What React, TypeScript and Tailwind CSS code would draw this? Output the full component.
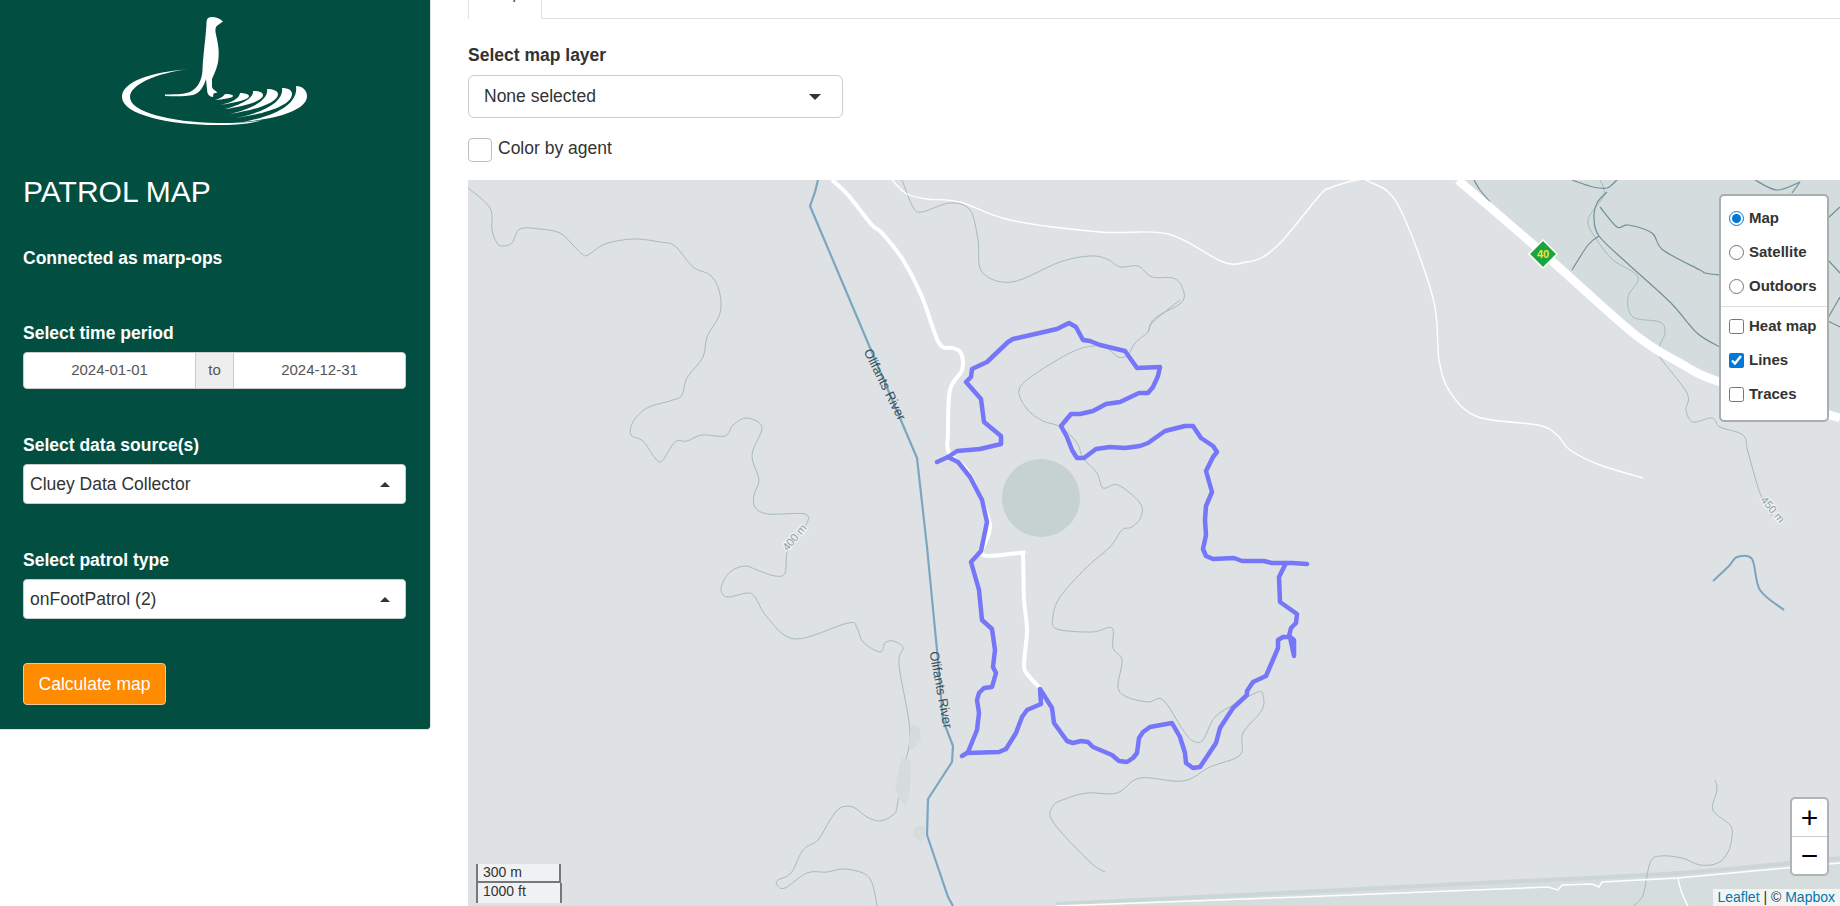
const contours = [
  "468,188 490,208 492,230 497,243 503,246 512,243 520,229 540,229 560,233 573,245 582,254 588,255 605,244 633,239 660,242 675,246 693,267 710,275 719,290 720,313 707,337 703,357 687,378 682,395 673,400 647,408 633,422 631,435 643,441 655,458 662,461 675,442 687,441 702,435 725,436 733,425 747,418 762,427 753,450 753,462 759,480 754,495 755,507 768,514 805,514 806,525 795,538 787,552 785,573 775,576 757,570 745,566 730,572 721,588 727,597 747,593 755,597 767,617 795,639 848,623 857,628 863,642 880,652 885,643 893,641 903,648 899,665 910,733 902,773 897,807 893,815 880,821 867,817 853,807 840,808 830,820 818,840 803,850 791,873 778,880 777,885 785,888 807,873 827,872 843,869 863,873 872,883 877,906",
  "1180,300 1153,322 1148,332 1135,343 1128,355 1118,357 1107,348 1093,346 1072,352 1035,374 1019,390 1027,409 1043,421 1061,427 1077,443 1083,458 1097,473 1103,488 1118,485 1140,503 1141,517 1132,527 1122,530 1110,547 1087,567 1060,597 1053,617 1057,629 1092,632 1112,628 1113,648 1122,660 1118,687 1127,697 1148,702 1163,700 1183,730 1193,741 1203,740 1215,717 1237,703 1258,692 1263,695 1262,710 1243,733 1240,755 1210,767 1183,781 1140,778 1117,793 1087,793 1065,799 1053,806 1053,822 1090,862 1105,872",
  "902,180 913,207 922,212 950,203 970,210 978,240 982,272 1012,282 1060,262 1090,256 1107,259 1120,267 1138,266 1152,277 1173,278 1182,287 1182,302 1155,318 1148,332",
  "1600,180 1604,195 1588,220 1597,240 1613,260 1638,277 1628,297 1633,317 1660,322 1665,333 1660,345 1660,357 1687,393 1686,410 1693,422 1712,418 1720,427 1743,435 1748,452 1760,493 1772,516",
  "1715,780 1717,790 1713,810 1730,825 1732,837 1728,852 1718,863 1700,865 1682,858 1660,856 1650,863 1643,895 1633,906",
];

const darkLines = [
  "1474,180 1480,190 1490,202",
  "1572,180 1593,187 1607,188 1617,180",
  "1607,192 1597,203 1594,217 1599,236 1627,263 1670,302 1697,333 1720,347",
  "1600,207 1617,227 1628,225 1652,233 1663,250 1700,270 1705,273 1720,275",
  "1599,236 1588,245 1572,270",
  "1755,180 1777,190 1800,182",
  "1792,193 1800,182",
  "1828,218 1840,207",
  "1828,260 1840,273",
  "1828,318 1840,297",
  "1828,321 1840,327",
];

const riverPts = "818,180 815,192 810,206 868,343 917,458 927,547 937,650 943,720 953,746 952,762 928,799 927,835 948,897 953,906";

const routeOuter =
  "937,462 948,457 957,451 980,449 1001,444 1001,436 984,422 981,399 966,382 971,377 972,369 987,362 1008,342 1013,339 1057,329 1069,323 1076,327 1083,340 1090,341 1100,345 1125,351 1137,368 1160,367 1158,376 1153,387 1148,393 1139,393 1120,402 1106,404 1093,411 1080,414 1071,414 1061,426 1067,437 1072,450 1077,458 1084,458 1096,449 1110,447 1125,448 1140,446 1148,443 1165,431 1185,426 1193,426 1201,438 1213,446 1217,452 1213,457 1206,471 1212,492 1206,506 1205,520 1206,535 1203,549 1206,556 1213,559 1234,558 1242,561 1264,561 1272,563 1292,563 1307,564";
const routeLoop =
  "1286,563 1279,577 1280,602 1297,614 1296,623 1291,628 1289,636 1294,640 1294,656 1290,637 1283,637 1278,640 1278,648 1266,676 1253,682 1247,691 1247,695 1233,708 1220,728 1216,743 1200,767 1193,768 1186,763 1185,753 1180,737 1172,723 1150,727 1143,732 1139,738 1137,753 1133,758 1127,762 1119,761 1112,755 1093,747 1088,742 1081,741 1073,743 1067,741 1054,723 1052,708 1040,689 1041,704 1027,710 1022,717 1016,733 1006,749 999,752 967,753 962,756 968,752 977,730 979,713 977,700 979,693 984,688 992,687 996,673 993,667 995,650 992,629 982,620 979,590 971,562 981,551 987,522 982,500 970,477 958,462 948,457";

// catmull-rom through the points, the contours and roads are curved in the tiles
function smooth(points: string) {
  const p = points.split(" ").map((s) => s.split(",").map(Number));
  let d = `M${p[0][0]} ${p[0][1]}`;
  for (let i = 0; i < p.length - 1; i++) {
    const a = p[Math.max(i - 1, 0)];
    const b = p[i];
    const c = p[i + 1];
    const e = p[Math.min(i + 2, p.length - 1)];
    d += ` C${b[0] + (c[0] - a[0]) / 6} ${b[1] + (c[1] - a[1]) / 6} ${c[0] - (e[0] - b[0]) / 6} ${c[1] - (e[1] - b[1]) / 6} ${c[0]} ${c[1]}`;
  }
  return d;
}

function MapTiles() {
  return (
    <svg viewBox="468 180 1372 726" className="block w-full h-full">
      <polygon points="1462,180 1840,180 1840,414 1720,378 1680,359 1633,329 1543,249" fill="#d5dcdd" />
      <polygon points="1056,906 1300,893 1500,884 1678,874 1840,859 1840,906" fill="#d6dddd" />
      <path d={smooth("1056,904 1300,892 1500,882 1678,873 1840,858")} fill="none" stroke="#c5d1d0" strokeWidth="4" opacity="0.7" />
      {contours.map((c) => (
        <path key={c} d={smooth(c)} fill="none" stroke="#a6bbb9" strokeWidth="1" />
      ))}
      {darkLines.map((c) => (
        <path key={c} d={smooth(c)} fill="none" stroke="#6f919a" strokeWidth="1.2" />
      ))}
      <circle cx="1041" cy="498" r="39" fill="#c5d2cf" />
      <polygon points="912,724 920,728 921,740 912,750 908,745" fill="#d5dcdb" />
      <polygon points="902,757 911,762 910,790 906,806 898,798 895,785" fill="#d5dcdb" />
      <polygon points="920,825 925,828 925,838 920,841 913,836 914,828" fill="#d5dcdb" />
      <path d={smooth("1713,581 1729,566 1737,557 1752,559 1760,590 1784,610")} fill="none" stroke="#7aa5bf" strokeWidth="2" />
      <polyline points={riverPts} fill="none" stroke="#7ba6c0" strokeWidth="2.2" strokeLinejoin="round" />
      <path d={smooth("832,180 848,195 872,225 882,233 903,260 922,297 939,343 953,348 961,353 962,370 950,390 948,433 949,453 968,472 988,517 989,533 983,555 1020,553 1023,557 1024,600 1027,630 1024,665 1028,675 1040,688")} fill="none" stroke="#fff" strokeWidth="4" strokeLinejoin="round" />
      <path d={smooth("892,180 907,194 927,199 960,202 1010,220 1100,232 1168,234 1223,262 1247,262 1263,257 1283,240 1320,195 1330,188 1357,180 1370,182 1398,205 1433,298 1439,360 1450,392 1478,417 1538,425 1557,435 1570,450 1600,465 1643,478")} fill="none" stroke="#fff" strokeWidth="1.4" />
      <path d="M1056 906 L1300 897 L1500 889 L1548 887 L1558 890 L1562 885 L1592 884 L1599 887 L1602 882 L1678 878 L1840 863" fill="none" stroke="#fff" strokeWidth="1.5" />
      <path d="M1678 878 Q1680 892 1688 906" fill="none" stroke="#fff" strokeWidth="1.5" />
      <path d={smooth("1458,180 1543,253 1633,333 1680,363 1720,382 1840,418")} fill="none" stroke="#fff" strokeWidth="8.5" />
      <polyline points={routeOuter} fill="none" stroke="#7676f8" strokeWidth="4.5" strokeLinejoin="round" strokeLinecap="round" />
      <polyline points={routeLoop} fill="none" stroke="#7676f8" strokeWidth="4.5" strokeLinejoin="round" strokeLinecap="round" />
      <polygon points="1543,240 1557,254 1543,268 1529,254" fill="#1ba541" stroke="#fff" strokeWidth="1.5" />
      <text x="1543" y="258" textAnchor="middle" fontSize="11" fontWeight="700" fill="#f2e23d" fontFamily="Liberation Sans, sans-serif">40</text>
      <text transform="translate(884 385) rotate(63.5)" textAnchor="middle" dominantBaseline="middle" fontSize="13" fill="#36505e" fontFamily="Liberation Sans, sans-serif">Olifants River</text>
      <text transform="translate(940 690) rotate(79.5)" textAnchor="middle" dominantBaseline="middle" fontSize="13" fill="#36505e" fontFamily="Liberation Sans, sans-serif">Olifants River</text>
      <text transform="translate(795 538) rotate(-50)" textAnchor="middle" dominantBaseline="middle" fontSize="11" fill="#8fa09f" stroke="#f0f2f3" strokeWidth="2.5" paintOrder="stroke" fontFamily="Liberation Sans, sans-serif">400 m</text>
      <text transform="translate(1772 510) rotate(50)" textAnchor="middle" dominantBaseline="middle" fontSize="11" fill="#8fa09f" stroke="#f0f2f3" strokeWidth="2.5" paintOrder="stroke" fontFamily="Liberation Sans, sans-serif">450 m</text>
    </svg>
  );
}

function MeerkatLogo() {
  return (
    <svg viewBox="100 0 240 130" className="block w-[240px] h-[130px] ml-[77px]" fill="#fff">
      <path d="M223 21.5 C219 18 216 17 212 17 C208 17 206.5 19 206.5 23 C206 36 203 55 202.5 70 C202 80 198 88 190 92 C183 94.5 172 94.5 165 94.5 L165 96 C175 96.5 186 96.5 193 95 C200 93 204 86 206 79 C206.5 84 207 90 207.5 93 C209 96 211 97 213 97 L213.5 93.5 L217.5 92.5 C215 90.5 212.5 89 212 87 L212 79 C215 72 218 66 218.5 58 C219.5 48 217 40 215.5 32 C215 29 216 26 218 25 Z" />
      <path d="M190 69 C150 72 122 82 122 97 C122 115 170 125 217 125 C232 125 250 124 262 120 C245 123 232 123 217 123 C170 122 130 112 130 97 C130 85 155 73 190 69 Z" />
      <path d="M215 100 C222 99.5 233 98 233 96 C233 94.5 229 94 225 94 C224 96 220 98.5 215 100 Z" />
      <path d="M220 105 C233 103 249 100 249 96 C249 94 244 93 240 93 C240 98 231 103 220 105 Z" />
      <path d="M225 109 C245 106 263 101 263 95 C263 92 258 91 253 91 C254 98 241 105 225 109 Z" />
      <path d="M230 114 C255 110 278 103 278 94 C278 91 273 89 267 89 C269 99 253 109 230 114 Z" />
      <path d="M235 118 C266 114 292 105 292 94 C292 90 288 88 282 88 C284 100 268 112 235 118 Z" />
      <path d="M243 122 C285 118 307 108 307 96 C307 90 302 86 296 86 C298 100 285 114 243 122 Z" />
    </svg>
  );
}

function SideLabel({ children, top }: { children: string; top: string }) {
  return <div className={`text-white font-bold text-[17.5px] leading-6 ${top}`}>{children}</div>;
}

function DarkSelect({ value }: { value: string }) {
  return (
    <div className="mt-[7px] h-10 bg-white border border-[#ccc] rounded flex items-center justify-between pl-[6px] pr-[15px] text-[17.5px] text-[#333]">
      <span>{value}</span>
      <span className="w-0 h-0 border-x-[5px] border-x-transparent border-b-[5px] border-b-[#333]" />
    </div>
  );
}

function LayerRow({ type, label, checked }: { type: "radio" | "checkbox"; label: string; checked?: boolean }) {
  return (
    <label className="flex items-center h-[34px] pl-[8px] gap-[5px]">
      <input type={type} name={type === "radio" ? "base" : undefined} defaultChecked={checked} className="w-[15px] h-[15px] m-0 accent-[#0078d7]" />
      <span>{label}</span>
    </label>
  );
}

export default function App() {
  return (
    <div className="flex h-[906px] overflow-hidden bg-white font-['Liberation_Sans',Arial,sans-serif]">
      <aside className="w-[431px] h-[730px] shrink-0 bg-[#024f41] rounded-br pl-[23px] pr-[24px] border-r border-b border-[#e3e3e3]">
        <MeerkatLogo />
        <h1 className="mt-[45px] text-[30px] leading-[34px] text-white">PATROL MAP</h1>
        <div className="mt-[37px] text-white font-bold text-[17.5px] leading-6">Connected as marp-ops</div>
        <SideLabel top="mt-[51px]">Select time period</SideLabel>
        <div className="mt-[7px] h-[37px] flex bg-white border border-[#ccc] rounded text-[15px] text-[#555] overflow-hidden">
          <div className="flex-1 flex items-center justify-center">2024-01-01</div>
          <div className="w-[39px] flex items-center justify-center bg-[#eee] border-x border-[#ccc]">to</div>
          <div className="flex-1 flex items-center justify-center">2024-12-31</div>
        </div>
        <SideLabel top="mt-[44px]">Select data source(s)</SideLabel>
        <DarkSelect value="Cluey Data Collector" />
        <SideLabel top="mt-[44px]">Select patrol type</SideLabel>
        <DarkSelect value="onFootPatrol (2)" />
        <button className="block mt-[44px] w-[143px] h-[42px] bg-[#ff8c00] border border-[#e8c9a0] rounded text-white text-[17.5px]">
          Calculate map
        </button>
      </aside>

      <main className="flex-1 min-w-0 pl-[37px] flex flex-col">
        <div className="h-[19px] border-b border-[#dee2e6] flex shrink-0">
          <div className="w-[74px] h-[19px] border-x border-[#dee2e6] bg-white flex items-end justify-center overflow-hidden">
            <span className="text-[17.5px] leading-6 text-[#555] translate-y-[-15px]">Map</span>
          </div>
        </div>
        <div className="mt-6 font-bold text-[17.5px] leading-6 text-[#333]">Select map layer</div>
        <div className="mt-2 w-[375px] h-[43px] border border-[#ccc] rounded-md flex items-center justify-between pl-[15px] pr-[21px] text-[17.5px] text-[#333]">
          <span>None selected</span>
          <span className="w-0 h-0 border-x-[6px] border-x-transparent border-t-[6px] border-t-[#333]" />
        </div>
        <div className="mt-5 h-[23px] flex items-start gap-[6px] text-[17.5px] leading-5 text-[#333]">
          <span className="w-6 h-6 border border-[#b8c0c8] rounded" />
          <span>Color by agent</span>
        </div>
        <div className="relative mt-[19px] h-[726px] shrink-0 bg-[#dfe2e5] overflow-hidden">
          <MapTiles />
          <div className="absolute top-[14px] right-[11px] w-[110px] h-[228px] bg-white border-2 border-[#a9aeb0] rounded-[5px] bg-clip-padding text-[15px] font-bold text-[#333] pt-[5px]">
            <LayerRow type="radio" label="Map" checked />
            <LayerRow type="radio" label="Satellite" />
            <LayerRow type="radio" label="Outdoors" />
            <div className="border-t border-[#ddd] mt-[3px] mb-[2px]" />
            <LayerRow type="checkbox" label="Heat map" />
            <LayerRow type="checkbox" label="Lines" checked />
            <LayerRow type="checkbox" label="Traces" />
          </div>
          <div className="absolute bottom-[30px] right-[11px] w-[39px] h-[79px] bg-white border-2 border-[#b0b4b6] rounded-[5px] bg-clip-padding flex flex-col text-black text-[30px] leading-none">
            <div className="h-[38px] flex items-center justify-center border-b border-[#ccc]">+</div>
            <div className="h-[37px] flex items-center justify-center">−</div>
          </div>
          <div className="absolute left-2 bottom-[3px] text-[14px] leading-[17px] text-[#333]">
            <div className="w-[85px] h-[19px] border-x-2 border-b-2 border-[#777] bg-white/50 pl-[5px]">300 m</div>
            <div className="w-[86px] h-[20px] border-x-2 border-[#777] bg-white/50 pl-[5px]">1000 ft</div>
          </div>
          <div className="absolute right-0 bottom-0 h-[17px] px-[5px] bg-white/70 text-[14px] leading-[17px] text-[#333]">
            <span className="text-[#0078a8]">Leaflet</span> | © <span className="text-[#0078a8]">Mapbox</span>
          </div>
        </div>
      </main>
    </div>
  );
}
